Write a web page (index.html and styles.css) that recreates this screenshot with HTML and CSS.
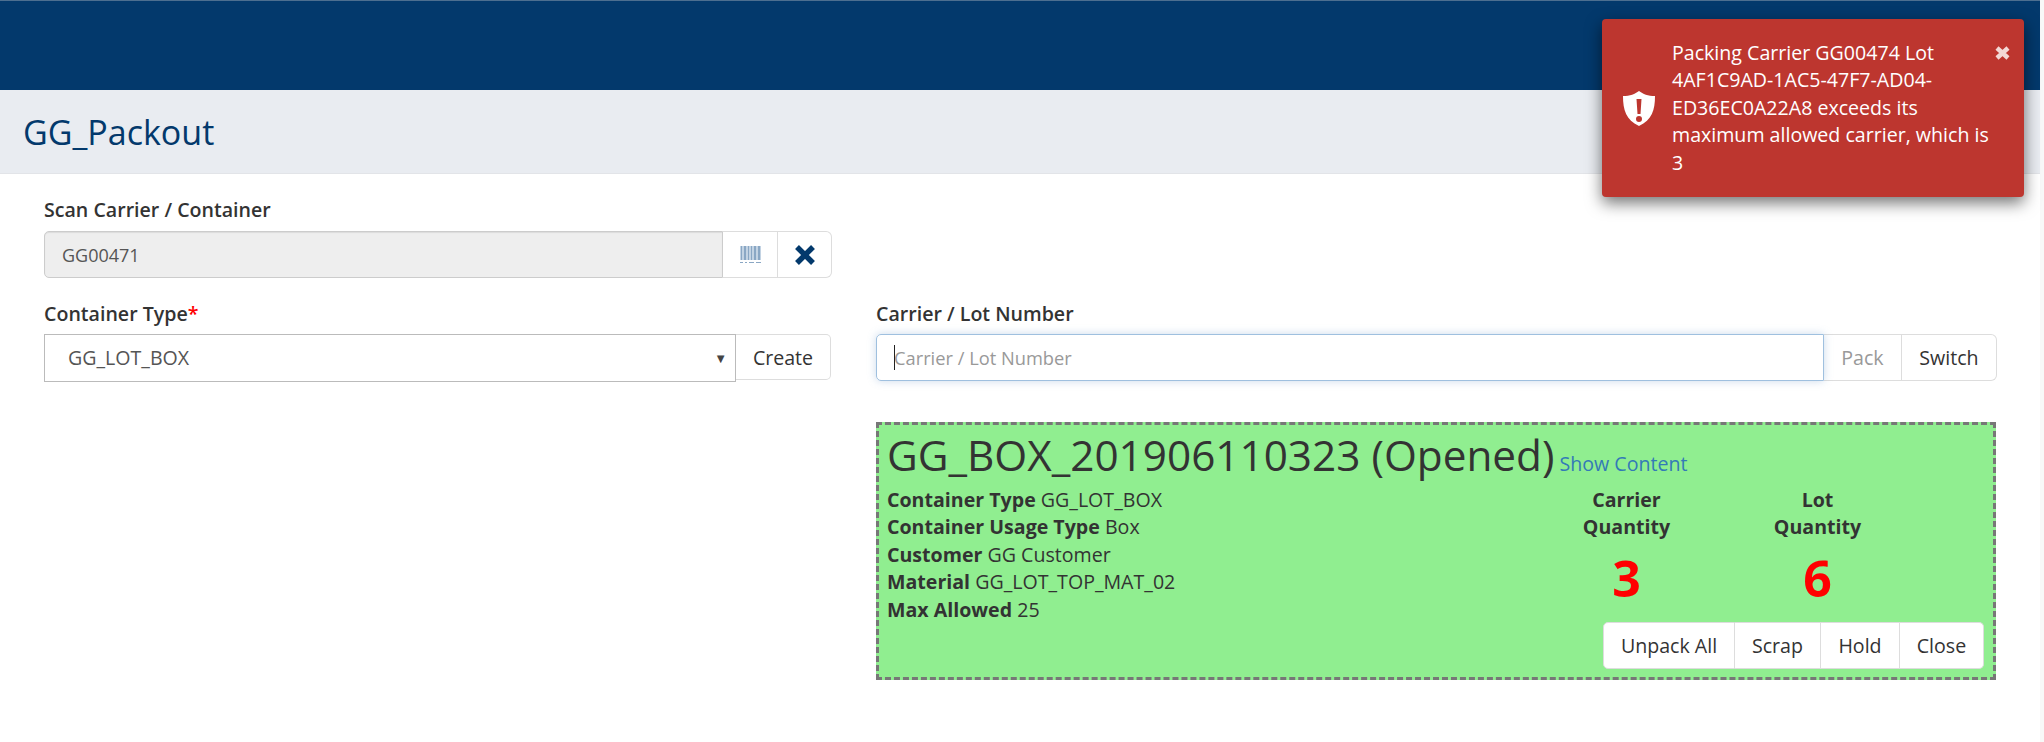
FILE: index.html
```html
<!DOCTYPE html>
<html lang="en">
  <head>
    <meta charset="UTF-8" />
    <title>GG_Packout</title>
    <link rel="stylesheet" href="styles.css">
  </head>
  <body>
    <div class="page">
      <header class="topbar"></header>
      <div class="titlebar"><h1>GG_Packout</h1></div>

      <main class="content">
        <div class="col-left">
          <label class="field-label">Scan Carrier / Container</label>
          <div class="input-group scan-group">
            <div class="scan-value">GG00471</div>
            <span class="addon barcode-addon">
              <svg width="21" height="17" viewBox="0 0 21 17">
                <path fill="#c3d3e3" d="M0 0h21v14H0z" />
                <path fill="#8aa7c4" d="M1 0h1v14H1zM4 0h2v14H4zM8 0h1v14H8zM11 0h1v14h-1zM14 0h2v14h-2zM18 0h2v14h-2z" />
                <path fill="#8aa7c4" d="M0 16h3v1H0zM5 16h2v1H5zM9 16h5v1H9zM16 16h5v1h-5z" />
              </svg>
            </span>
            <button class="btn clear-btn">
              <svg width="22" height="20" viewBox="0 0 22 20">
                <path d="M3 2l16 16M19 2L3 18" stroke="#03396c" stroke-width="5.500" />
              </svg>
            </button>
          </div>

          <label class="field-label second">Container Type<span class="required">*</span></label>
          <div class="input-group select-group">
            <div class="select-box">
              <span>GG_LOT_BOX</span>
              <span class="caret">▼</span>
            </div>
            <button class="btn create-btn">Create</button>
          </div>
        </div>

        <div class="col-right">
          <label class="field-label">Carrier / Lot Number</label>
          <div class="input-group lot-group">
            <div class="lot-input"><i class="cursor"></i>Carrier / Lot Number</div>
            <button class="btn pack-btn">Pack</button>
            <button class="btn switch-btn">Switch</button>
          </div>

          <section class="container-box">
            <div class="box-title">
              <span class="box-name">GG_BOX_201906110323 (Opened)</span>
              <a class="show-link">Show Content</a>
            </div>
            <div class="box-body">
              <div class="box-info">
                <div><b>Container Type</b> GG_LOT_BOX</div>
                <div><b>Container Usage Type</b> Box</div>
                <div><b>Customer</b> GG Customer</div>
                <div><b>Material</b> GG_LOT_TOP_MAT_02</div>
                <div><b>Max Allowed</b> 25</div>
              </div>
              <div class="qty carrier-qty">
                <b>Carrier<br />Quantity</b>
                <div class="qty-num">3</div>
              </div>
              <div class="qty lot-qty">
                <b>Lot<br />Quantity</b>
                <div class="qty-num">6</div>
              </div>
            </div>
            <div class="box-actions">
              <button class="btn unpack-btn">Unpack All</button>
              <button class="btn scrap-btn">Scrap</button>
              <button class="btn hold-btn">Hold</button>
              <button class="btn close-btn">Close</button>
            </div>
          </section>
        </div>
      </main>

      <div class="toast">
        <svg class="toast-icon" width="32" height="35" viewBox="0 0 32 35">
          <path fill="#fff" fill-rule="evenodd" d="M16 0c4 3 9 5 16 5 0 14-3 24-16 30C3 29 0 19 0 5c7 0 12-2 16-5zM13.500 8l1 15h3l1-15zM16 25a3 3 0 1 0 0 6 3 3 0 0 0 0-6z" />
        </svg>
        <div class="toast-text">Packing Carrier GG00474 Lot 4AF1C9AD-1AC5-47F7-AD04-ED36EC0A22A8 exceeds its maximum allowed carrier, which is 3</div>
        <span class="toast-close">
          <svg width="15" height="14" viewBox="0 0 15 14">
            <path d="M2 2l11 10M13 2L2 12" stroke="#f3d9d6" stroke-width="4.500" />
          </svg>
        </span>
      </div>
    </div>
  </body>
</html>
```

FILE: styles.css
```css
* {
  box-sizing: border-box;
}
html,
body {
  margin: 0;
  height: 742px;
  overflow: hidden;
}
body {
  font-family: "Open Sans", sans-serif;
  font-size: 19.6px;
  color: #333;
  background-color: #f8f8f8;
}
.page {
  width: 2040px;
  height: 742px;
  background-color: #fff;
  position: relative;
}
.topbar {
  height: 90px;
  background-color: #03396c;
  border-top: 1px solid #4d6f90;
}
.titlebar {
  height: 84px;
  background-color: #e9ecf1;
  border-bottom: 1px solid #e2e4e8;
  padding: 19px 23px;
}
.titlebar h1 {
  margin: 0;
  font-size: 34px;
  font-weight: 400;
  line-height: 46px;
  color: #03396c;
}
.content {
  display: flex;
  padding: 24px 44px 0 44px;
}
.col-left {
  width: 788px;
  margin-right: 44px;
}
.col-right {
  flex: 1;
  padding-top: 104px;
}
.field-label {
  display: block;
  font-size: 19.6px;
  font-weight: 600;
  line-height: 24px;
  color: #333;
  height: 33px;
}
.col-right .field-label {
  height: 32px;
}
.field-label.second {
  height: 32px;
  margin-top: 24px;
}
.required {
  color: #f00;
}
.input-group {
  display: flex;
}
.btn {
  font-family: inherit;
  font-size: 19.6px;
  color: #333;
  background-color: #fff;
  border: 1px solid #ddd;
  padding: 0;
  height: 47px;
}
.scan-group {
  height: 47px;
}
.scan-value {
  width: 679px;
  background-color: #eee;
  border: 1px solid #ccc;
  border-radius: 5px 0 0 5px;
  box-shadow: inset 0 1px 1px rgba(0, 0, 0, 0.08);
  padding-left: 17px;
  font-size: 18px;
  line-height: 47px;
  color: #555;
}
.addon {
  width: 55px;
  border: 1px solid #ddd;
  border-left: none;
  display: flex;
  align-items: center;
  justify-content: center;
}
.clear-btn {
  width: 54px;
  border-left: none;
  border-radius: 0 6px 6px 0;
  display: flex;
  align-items: center;
  justify-content: center;
}
.select-group {
  height: 48px;
}
.select-box {
  width: 692px;
  height: 48px;
  border: 1px solid #bbb;
  display: flex;
  justify-content: space-between;
  padding: 0 8px 0 23px;
  line-height: 46px;
  font-size: 19.6px;
  color: #555;
}
.caret {
  font-size: 13px;
  color: #444;
}
.create-btn {
  width: 95px;
  height: 46px;
  border-left: none;
  border-radius: 0 5px 5px 0;
}
.lot-group {
  height: 47px;
}
.lot-input {
  width: 948px;
  height: 47px;
  border: 1px solid #9fc0df;
  border-radius: 5px 0 0 5px;
  box-shadow: 0 0 8px rgba(102, 150, 200, 0.35);
  padding-left: 17px;
  font-size: 18.3px;
  line-height: 45px;
  color: #999;
  display: flex;
  align-items: center;
  position: relative;
}
.cursor {
  position: absolute;
  left: 17px;
  top: 10px;
  width: 1px;
  height: 25px;
  background-color: #222;
}
.pack-btn {
  width: 78px;
  border-left: none;
  color: #999;
}
.switch-btn {
  width: 95px;
  border-left: none;
  border-radius: 0 6px 6px 0;
}
.container-box {
  width: 1120px;
  height: 258px;
  margin-top: 41px;
  background-color: #90ee90;
  border: 3px dashed #777;
  padding: 0 8px;
  position: relative;
}
.box-title {
  height: 61px;
  display: flex;
  align-items: baseline;
  white-space: nowrap;
}
.box-name {
  font-size: 42.3px;
  line-height: 60px;
}
.show-link {
  font-size: 19.6px;
  color: #337ab7;
  margin-left: 5px;
}
.box-body {
  display: flex;
  line-height: 27.4px;
  font-size: 19.6px;
}
.box-info {
  width: 644px;
}
.qty {
  width: 191px;
  text-align: center;
}
.qty-num {
  font-size: 50px;
  font-weight: 700;
  line-height: 75px;
  color: #f00;
}
.box-actions {
  display: flex;
  position: absolute;
  right: 9px;
  bottom: 8px;
}
.box-actions .btn {
  height: 47px;
  border-left: none;
}
.box-actions .unpack-btn {
  width: 132px;
  border-left: 1px solid #ddd;
  border-radius: 5px 0 0 5px;
}
.scrap-btn {
  width: 86px;
}
.hold-btn {
  width: 79px;
}
.close-btn {
  width: 84px;
  border-radius: 0 5px 5px 0;
}
.toast {
  position: absolute;
  left: 1602px;
  top: 19px;
  width: 422px;
  height: 178px;
  background-color: #bd362f;
  border-radius: 4px;
  box-shadow: 0 6px 16px rgba(0, 0, 0, 0.55);
  color: #fff;
  font-size: 19.6px;
  line-height: 27.4px;
  padding: 20px 30px 0 70px;
}
.toast-icon {
  position: absolute;
  left: 21px;
  top: 72px;
}
.toast-close {
  position: absolute;
  right: 14px;
  top: 27px;
  display: flex;
}
```
